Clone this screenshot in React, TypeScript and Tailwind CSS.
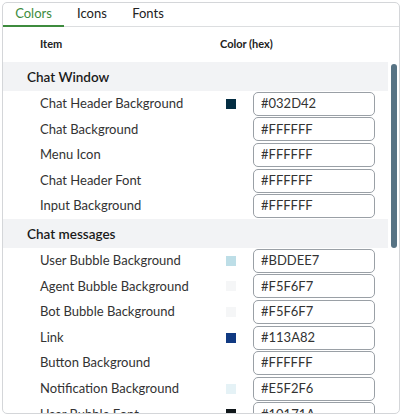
import React from "react";

type Row = { label: string; hex: string; swatch?: string };

const sections: { title: string; rows: Row[] }[] = [
  {
    title: "Chat Window",
    rows: [
      { label: "Chat Header Background", hex: "#032D42", swatch: "#032D42" },
      { label: "Chat Background", hex: "#FFFFFF", swatch: "#FFFFFF" },
      { label: "Menu Icon", hex: "#FFFFFF", swatch: "#FFFFFF" },
      { label: "Chat Header Font", hex: "#FFFFFF", swatch: "#FFFFFF" },
      { label: "Input Background", hex: "#FFFFFF", swatch: "#FFFFFF" },
    ],
  },
  {
    title: "Chat messages",
    rows: [
      { label: "User Bubble Background", hex: "#BDDEE7", swatch: "#BDDEE7" },
      { label: "Agent Bubble Background", hex: "#F5F6F7", swatch: "#F5F6F7" },
      { label: "Bot Bubble Background", hex: "#F5F6F7", swatch: "#F5F6F7" },
      { label: "Link", hex: "#113A82", swatch: "#113A82" },
      { label: "Button Background", hex: "#FFFFFF", swatch: "#FFFFFF" },
      { label: "Notification Background", hex: "#E5F2F6", swatch: "#E5F2F6" },
      { label: "User Bubble Font", hex: "#10171A", swatch: "#10171A" },
      { label: "Agent Bubble Font", hex: "#10171A", swatch: "#10171A" },
    ],
  },
];

export default function App() {
  return (
    <div
      className="w-[402px] h-[416px] bg-white p-[2px]"
      style={{ fontFamily: "Lato, 'Noto Sans', sans-serif" }}
    >
      <div className="relative h-[412px] border border-[#d4d6d9] rounded-[5px] overflow-hidden flex flex-col">
        <div className="flex h-[24px] border-b border-[#dcdee0] shrink-0 text-[13px] text-[#222]">
          <div className="w-[61px] flex justify-center items-center border-b-2 border-[#3d8b3d] -mb-px text-[#3d8b3d] pb-[1px]">
            Colors
          </div>
          <div className="w-[56px] flex justify-center items-center pb-[1px]">Icons</div>
          <div className="w-[56px] flex justify-center items-center pb-[1px]">Fonts</div>
        </div>
        <div className="flex items-center h-[35px] shrink-0 text-[11px] font-bold text-[#222]">
          <div className="pl-[37px] w-[217px]">Item</div>
          <div>Color (hex)</div>
        </div>
        <div className="flex-1 overflow-hidden pr-[11px]">
          {sections.map((s) => (
            <div key={s.title}>
              <div className="h-[29px] bg-[#f2f3f5] flex items-center pl-[24px] pt-[1px] text-[13.5px] font-semibold text-[#1a1a1a]">
                {s.title}
              </div>
              {s.rows.map((r, i) => (
                <div key={i} className="h-[25.6px] flex items-center text-[13px] text-[#333]">
                  <div className="pl-[37px] w-[223px] whitespace-nowrap">{r.label}</div>
                  <div
                    className="w-[10px] h-[10px]"
                    style={{ backgroundColor: r.swatch }}
                  />
                  <div className="ml-[17px] w-[122px] h-[24px] border border-[#9aa0a6] rounded-[5px] flex items-center pl-[7px] text-[13px] text-[#333]">
                    {r.hex}
                  </div>
                </div>
              ))}
            </div>
          ))}
        </div>
        <div className="absolute right-[2px] top-[61px] w-[6px] h-[184px] rounded-full bg-[#577384]" />
      </div>
    </div>
  );
}
